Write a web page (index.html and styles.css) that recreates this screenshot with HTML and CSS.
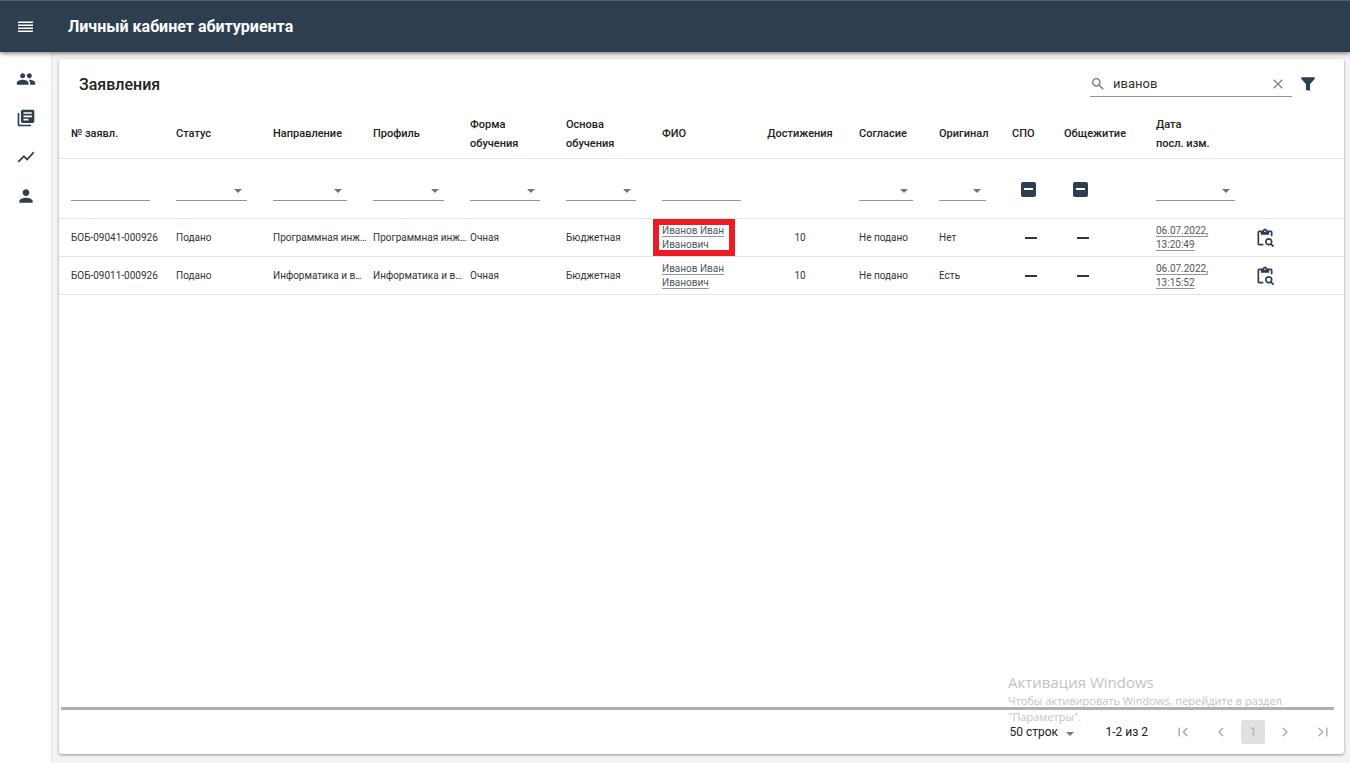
FILE: index.html
```
<!DOCTYPE html>
<html lang="ru">
<head>
<meta charset="utf-8">
<title>Личный кабинет абитуриента</title>
<link rel="stylesheet" href="styles.css">
</head>
<body>
<svg class="defs" aria-hidden="true">
  <symbol id="clipboard" viewBox="0 0 24 24"><path d="M5 5h2v3h10V5h2v5h2V5c0-1.100-.9-2-2-2h-4.180C14.400 1.840 13.300 1 12 1s-2.400.84-2.820 2H5c-1.100 0-2 .9-2 2v14c0 1.100.9 2 2 2h5v-2H5zm7-2c.55 0 1 .45 1 1s-.45 1-1 1-1-.45-1-1 .45-1 1-1"/><path d="M20.300 18.900c.4-.7.7-1.500.7-2.400 0-2.500-2-4.500-4.500-4.500S12 14 12 16.500s2 4.500 4.500 4.500c.9 0 1.700-.3 2.400-.7l2.700 2.700 1.400-1.400zm-3.800.1c-1.400 0-2.500-1.100-2.500-2.500s1.100-2.500 2.500-2.500 2.500 1.100 2.500 2.500-1.100 2.500-2.500 2.500"/></symbol>
</svg>
<header class="topbar">
  <button class="icon-btn menu" aria-label="Меню"><svg viewBox="0 0 20 20"><path d="M2 4.500h15v1.400H2zM2 7.500h15v1.400H2zM2 10.500h15v1.400H2zM2 13.500h15v1.400H2z"/></svg></button>
  <h1>Личный кабинет абитуриента</h1>
</header>
<div class="shell">
  <nav class="sidebar">
    <a href="#" aria-label="Абитуриенты"><svg viewBox="0 0 24 24"><path d="M16 11c1.660 0 2.990-1.340 2.990-3S17.660 5 16 5s-3 1.340-3 3 1.340 3 3 3m-8 0c1.660 0 2.990-1.340 2.990-3S9.660 5 8 5 5 6.340 5 8s1.340 3 3 3m0 2c-2.330 0-7 1.170-7 3.500V19h14v-2.500C15 14.170 10.330 13 8 13m8 0c-.29 0-.62.020-.97.050 1.160.84 1.970 1.970 1.970 3.450V19h6v-2.500c0-2.330-4.670-3.500-7-3.500"/></svg></a>
    <a href="#" aria-label="Заявления"><svg viewBox="0 0 24 24"><path d="M4 6H2v14c0 1.100.9 2 2 2h14v-2H4zm16-4H8c-1.100 0-2 .9-2 2v12c0 1.100.9 2 2 2h12c1.100 0 2-.9 2-2V4c0-1.100-.9-2-2-2m-1 9H9V9h10zm-4 4H9v-2h6zm4-8H9V5h10z"/></svg></a>
    <a href="#" aria-label="Статистика"><svg viewBox="0 0 24 24"><path d="m3.500 18.490 6-6.010 4 4L22 6.920l-1.410-1.410-7.090 7.970-4-4L2 16.990z"/></svg></a>
    <a href="#" aria-label="Профиль"><svg viewBox="0 0 24 24"><path d="M12 12c2.210 0 4-1.790 4-4s-1.790-4-4-4-4 1.790-4 4 1.790 4 4 4m0 2c-2.670 0-8 1.340-8 4v2h16v-2c0-2.660-5.330-4-8-4"/></svg></a>
  </nav>
  <main class="content">
    <section class="card">
      <div class="card-head">
        <h2>Заявления</h2>
        <div class="search">
          <svg viewBox="0 0 24 24"><path d="M15.500 14h-.79l-.28-.27C15.410 12.590 16 11.110 16 9.500 16 5.910 13.090 3 9.500 3S3 5.910 3 9.500 5.910 16 9.500 16c1.610 0 3.090-.59 4.230-1.570l.27.280v.79l5 4.990L20.490 19zm-6 0C7.010 14 5 11.990 5 9.500S7.010 5 9.500 5 14 7.010 14 9.500 11.990 14 9.500 14"/></svg>
          <input type="text" value="иванов" aria-label="Поиск">
          <button class="icon-btn" aria-label="Очистить"><svg viewBox="0 0 24 24"><path d="M20 5.400 18.600 4 12 10.600 5.400 4 4 5.400l6.600 6.600L4 18.600 5.400 20l6.600-6.600 6.600 6.600 1.400-1.400-6.600-6.600z"/></svg></button>
        </div>
        <button class="icon-btn funnel" aria-label="Фильтр"><svg viewBox="0 0 24 24"><path d="M2 2h20v2.500l-7 8V22l-6-1v-8.500l-7-8z"/></svg></button>
      </div>
      <div class="table-wrap">
        <table>
          <colgroup><col class="c-num"><col class="c-mid"><col class="c-dir"><col class="c-mid"><col class="c-form"><col class="c-form"><col class="c-name"><col class="c-ach"><col class="c-cons"><col class="c-orig"><col class="c-spo"><col class="c-dorm"><col class="c-date"><col></colgroup>
          <thead>
            <tr><th>№ заявл.</th><th>Статус</th><th>Направление</th><th>Профиль</th><th>Форма<br>обучения</th><th>Основа<br>обучения</th><th>ФИО</th><th class="center">Достижения</th><th>Согласие</th><th>Оригинал</th><th>СПО</th><th>Общежитие</th><th>Дата<br>посл. изм.</th><th></th></tr>
            <tr class="filters">
              <td><input class="line" type="text" aria-label="№ заявл."></td>
              <td><span class="drop"><select aria-label="Статус"><option></option></select></span></td>
              <td><span class="drop"><select aria-label="Направление"><option></option></select></span></td>
              <td><span class="drop"><select aria-label="Профиль"><option></option></select></span></td>
              <td><span class="drop"><select aria-label="Форма обучения"><option></option></select></span></td>
              <td><span class="drop"><select aria-label="Основа обучения"><option></option></select></span></td>
              <td class="wide"><input class="line" type="text" aria-label="ФИО"></td>
              <td></td>
              <td><span class="drop"><select aria-label="Согласие"><option></option></select></span></td>
              <td><span class="drop"><select aria-label="Оригинал"><option></option></select></span></td>
              <td><input class="tri" type="checkbox" aria-label="СПО"></td>
              <td><input class="tri" type="checkbox" aria-label="Общежитие"></td>
              <td class="date"><span class="drop"><select aria-label="Дата последнего изменения"><option></option></select></span></td>
              <td></td>
            </tr>
          </thead>
          <tbody>
            <tr><td>БОБ-09041-000926</td><td>Подано</td><td>Программная инж…</td><td>Программная инж…</td><td>Очная</td><td>Бюджетная</td><td class="wrap marked"><a href="#">Иванов Иван Иванович</a></td><td class="center">10</td><td>Не подано</td><td>Нет</td><td><i class="dash"></i></td><td><i class="dash"></i></td><td class="wrap"><a href="#">06.07.2022, 13:20:49</a></td><td><button class="icon-btn view" aria-label="Просмотр"><svg><use href="#clipboard"/></svg></button></td></tr>
            <tr><td>БОБ-09011-000926</td><td>Подано</td><td>Информатика и в…</td><td>Информатика и в…</td><td>Очная</td><td>Бюджетная</td><td class="wrap"><a href="#">Иванов Иван Иванович</a></td><td class="center">10</td><td>Не подано</td><td>Есть</td><td><i class="dash"></i></td><td><i class="dash"></i></td><td class="wrap"><a href="#">06.07.2022, 13:15:52</a></td><td><button class="icon-btn view" aria-label="Просмотр"><svg><use href="#clipboard"/></svg></button></td></tr>
          </tbody>
        </table>
      </div>
      <div class="scrollbar"></div>
      <footer class="pager">
        <span class="rows drop"><select aria-label="Строк на странице"><option>50 строк</option></select></span>
        <span class="range">1-2 из 2</span>
        <div class="pages">
          <button class="icon-btn first" aria-label="Первая"><svg viewBox="0 0 24 24"><path d="M18.410 16.590 13.820 12l4.590-4.590L17 6l-6 6 6 6zM6 6h2v12H6z"/></svg></button>
          <button class="icon-btn" aria-label="Назад"><svg viewBox="0 0 24 24"><path d="M15.410 7.410 14 6l-6 6 6 6 1.410-1.410L10.830 12z"/></svg></button>
          <button class="current">1</button>
          <button class="icon-btn" aria-label="Вперёд"><svg viewBox="0 0 24 24"><path d="M10 6 8.590 7.410 13.170 12l-4.580 4.590L10 18l6-6z"/></svg></button>
          <button class="icon-btn last" aria-label="Последняя"><svg viewBox="0 0 24 24"><path d="M5.590 7.410 10.180 12l-4.590 4.590L7 18l6-6-6-6zM16 6h2v12h-2z"/></svg></button>
        </div>
      </footer>
    </section>
  </main>
</div>
<aside class="watermark"><strong>Активация Windows</strong><p>Чтобы активировать Windows, перейдите в раздел "Параметры".</p></aside>
</body>
</html>
```
FILE: styles.css
```
* { box-sizing: border-box; }
body {
  margin: 0;
  min-height: 100vh;
  display: flex;
  flex-direction: column;
  background: #f4f4f4;
  color: #212121;
  font-family: Roboto, "Liberation Sans", sans-serif;
  font-size: 12px;
}
.defs { position: absolute; width: 0; height: 0; }
svg { display: block; fill: currentColor; width: 20px; height: 20px; }
button, input, select { font: inherit; color: inherit; border: 0; background: none; padding: 0; margin: 0; }
.icon-btn { display: flex; align-items: center; justify-content: center; }

.topbar {
  z-index: 2;
  display: flex;
  align-items: center;
  height: 52px;
  background: #2d3e50;
  border-top: 1px solid #55606b;
  color: #fff;
  box-shadow: 0 1px 5px rgba(0, 0, 0, .6);
}
.menu { width: 52px; }
.topbar h1 { margin: 0 0 0 16px; font-size: 16px; font-weight: 700; }

.shell { flex: 1; display: flex; }
.sidebar {
  width: 52px;
  padding-top: 17px;
  display: flex;
  flex-direction: column;
  align-items: center;
  gap: 19px;
  background: #fff;
  border-right: 1px solid #e4e4e4;
  color: #2d3e50;
}
.sidebar a { color: inherit; }
.content { flex: 1; min-width: 0; display: flex; padding: 7px 6px 9px 7px; }
.card {
  flex: 1;
  min-width: 0;
  display: flex;
  flex-direction: column;
  background: #fff;
  border-radius: 3px;
  box-shadow: 0 1px 3px rgba(0, 0, 0, .4);
}
.card-head { display: flex; align-items: center; height: 50px; padding: 0 28px 0 20px; }
.card-head h2 { margin: 0 auto 0 0; font-size: 16px; font-weight: 500; }
.search {
  display: flex;
  align-items: center;
  width: 202px;
  height: 26px;
  border-bottom: 1px solid #949494;
  color: #757575;
}
.search svg { width: 16px; height: 16px; }
.search input { flex: 1; min-width: 0; margin-left: 7px; color: #333; font-size: 13px; }
.search .icon-btn { margin-right: 7px; }
.search .icon-btn svg { width: 14px; height: 14px; }
.funnel { margin-left: 8px; color: #2d3e50; }
.funnel svg { width: 16px; height: 16px; }

.table-wrap { flex: 1; overflow: hidden; }
table { width: 100%; table-layout: fixed; border-collapse: collapse; }
.c-num { width: 112px; }
.c-mid { width: 97px; }
.c-dir { width: 100px; }
.c-form { width: 96px; }
.c-name { width: 89px; }
.c-ach { width: 108px; }
.c-cons { width: 80px; }
.c-orig { width: 73px; }
.c-spo { width: 52px; }
.c-dorm { width: 92px; }
.c-date { width: 102px; }
th, td { padding: 1px 0 0 5px; text-align: left; border-bottom: 1px solid #e3e3e3; }
th { height: 49px; font-size: 11px; font-weight: 500; line-height: 19px; white-space: nowrap; }
th:first-child, td:first-child { padding-left: 12px; }
td:last-child { padding-left: 2px; }
th.center, td.center { padding-left: 0; text-align: center; }
tbody td {
  height: 38px;
  font-size: 10px;
  line-height: 14px;
  color: #333;
  white-space: nowrap;
}
tbody .wrap { white-space: normal; }
tbody .wrap a { display: inline-block; width: 66px; }
tbody a { color: #4d5863; text-decoration-color: #8d959d; text-underline-offset: 2px; }
.marked { position: relative; }
.marked::after {
  content: "";
  position: absolute;
  inset: 0 11px 0 -4px;
  border: 6px solid #ed1c24;
  pointer-events: none;
}
.filters td { height: 60px; padding-top: 2px; padding-right: 21px; vertical-align: middle; }
.filters .wide { padding-right: 5px; }
.filters .date { padding-right: 18px; }
.line, .drop select { display: block; width: 100%; height: 24px; border-bottom: 1px solid #949494; border-radius: 0; }
.drop { position: relative; display: block; }
.drop select { appearance: none; }
.drop::after {
  content: "";
  position: absolute;
  right: 5px;
  top: 12px;
  border: 4px solid transparent;
  border-top-color: #757575;
  border-bottom: 0;
  pointer-events: none;
}
.tri {
  appearance: none;
  display: grid;
  place-items: center;
  width: 15px;
  height: 15px;
  margin-left: 9px;
  border-radius: 2px;
  background: #2d3e50;
}
.tri::before { content: ""; width: 9px; height: 2px; background: #fff; }
.dash { display: block; width: 12px; height: 2px; margin-left: 13px; background: #333; }
.view { color: #2d3e50; }

.scrollbar { height: 3px; margin: 0 10px 0 2px; background: #b0b0b0; }
.pager {
  display: flex;
  align-items: center;
  justify-content: flex-end;
  height: 44px;
  padding-right: 12px;
}
.rows { width: 70px; }
.rows select { border: 0; }
.range { margin-left: 26px; }
.pages { display: flex; align-items: center; gap: 11px; margin-left: 26px; color: #adadad; }
.pages svg { width: 18px; height: 18px; }
.pages .first { margin-right: 9px; }
.pages .last { margin-left: 9px; }
.pages .current { width: 24px; height: 24px; border-radius: 3px; background: #e0e0e0; }

.watermark {
  position: absolute;
  z-index: 3;
  left: 1008px;
  top: 672px;
  width: 300px;
  color: #c3c3c3;
  font: 11px/16px "Open Sans", "Noto Sans", sans-serif;
  pointer-events: none;
}
.watermark strong { display: block; font-size: 15px; font-weight: 400; line-height: 21px; }
.watermark p { margin: 0; }
```
